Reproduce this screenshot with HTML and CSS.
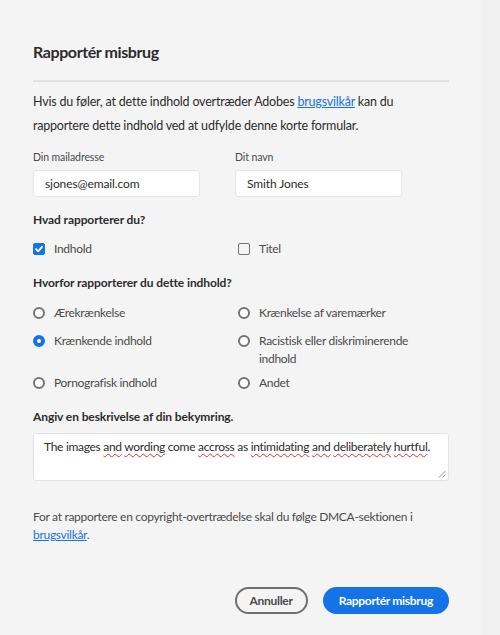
FILE: index.html
```html
<!DOCTYPE html>
<html lang="da">
<head>
<meta charset="utf-8">
<title>Rapportér misbrug</title>
<link rel="stylesheet" href="styles.css">
</head>
<body>
<div class="page">
  <div class="dialog">
    <h1 class="title">Rapportér misbrug</h1>
    <hr class="divider">
    <p class="intro"><span class="line">Hvis du føler, at dette indhold overtræder Adobes <a href="#" class="link">brugsvilkår</a> kan du</span><span class="line">rapportere dette indhold ved at udfylde denne korte formular.</span></p>

    <div class="fields">
      <div class="field">
        <label class="field-label">Din mailadresse</label>
        <div class="input">sjones@email.com</div>
      </div>
      <div class="field">
        <label class="field-label">Dit navn</label>
        <div class="input">Smith Jones</div>
      </div>
    </div>

    <h2 class="section section-what">Hvad rapporterer du?</h2>
    <div class="options checks">
      <div class="option"><span class="checkbox checked"><svg viewBox="0 0 12 12" width="12" height="12"><path d="M3 6.2 L5.1 8.3 L9 3.8" fill="none" stroke="#fff" stroke-width="1.8" stroke-linecap="round" stroke-linejoin="round"/></svg></span><span>Indhold</span></div>
      <div class="option"><span class="checkbox"></span><span>Titel</span></div>
    </div>

    <h2 class="section section-why">Hvorfor rapporterer du dette indhold?</h2>
    <div class="options radios">
      <div class="option"><span class="radio"></span><span>Ærekrænkelse</span></div>
      <div class="option"><span class="radio"></span><span>Krænkelse af varemærker</span></div>
      <div class="option"><span class="radio selected"></span><span>Krænkende indhold</span></div>
      <div class="option"><span class="radio"></span><span class="wrap-label">Racistisk eller diskriminerende indhold</span></div>
      <div class="option"><span class="radio"></span><span>Pornografisk indhold</span></div>
      <div class="option"><span class="radio"></span><span>Andet</span></div>
    </div>

    <h2 class="section section-desc">Angiv en beskrivelse af din bekymring.</h2>
    <div class="textarea">The images <span class="sp">and</span> <span class="sp">wording</span> come <span class="sp">accross</span> as <span class="sp">intimidating</span> <span class="sp">and</span> <span class="sp">deliberately</span> <span class="sp">hurtful</span>.<svg class="grip" viewBox="0 0 8 8" width="8" height="8"><path d="M7.5 1 L1 7.5 M7.5 4.5 L4.5 7.5" stroke="#8a8a8a" stroke-width="1"/></svg></div>

    <p class="note">For at rapportere en copyright-overtrædelse skal du følge DMCA-sektionen i <a href="#" class="link">brugsvilkår</a>.</p>

    <div class="actions">
      <button class="btn btn-secondary">Annuller</button>
      <button class="btn btn-primary">Rapportér misbrug</button>
    </div>
  </div>
  <div class="strip"></div>
</div>
</body>
</html>
```
FILE: styles.css
```css
* { box-sizing: border-box; }
html, body { margin: 0; padding: 0; }
body {
  background: #f4f4f4;
  font-family: Lato, "Open Sans", "Liberation Sans", sans-serif;
  color: #2c2c2c;
}
.page {
  display: flex;
  min-height: 635px;
}
.dialog {
  width: 482px;
  padding: 40px 33px 0 33px;
  background: #f4f4f4;
}
.strip {
  flex: 1;
  background: #f0f0f0;
}
.title {
  margin: 0;
  font-size: 16px;
  letter-spacing: -0.4px;
  font-weight: 700;
  line-height: 24px;
  color: #2c2c2c;
}
.divider {
  margin: 16px 0 0;
  border: 0;
  height: 2px;
  background: #e1e1e1;
  width: 416px;
}
.intro {
  margin: 8px 0 0;
  font-size: 12.5px;
  letter-spacing: -0.2px;
  line-height: 24px;
  color: #2c2c2c;
  width: 416px;
}
.line { display: block; white-space: nowrap; }
.link {
  color: #1473e6;
  text-decoration: underline;
}
.fields {
  display: flex;
  gap: 35px;
  margin-top: 11px;
}
.field {
  display: flex;
  flex-direction: column;
  width: 167px;
}
.field-label {
  font-size: 10.5px;
  letter-spacing: -0.1px;
  color: #4b4b4b;
  line-height: 16px;
  margin-bottom: 5px;
}
.input {
  height: 27px;
  background: #fff;
  border: 1px solid #e6e6e6;
  border-radius: 3px;
  padding: 0 11px;
  font-size: 12px;
  letter-spacing: -0.1px;
  line-height: 25px;
  color: #2c2c2c;
}
.section {
  margin: 0;
  font-size: 12px;
  letter-spacing: -0.1px;
  font-weight: 700;
  line-height: 18px;
  color: #2c2c2c;
}
.section-what { margin-top: 14px; }
.section-why { margin-top: 17px; }
.section-desc { margin-top: 17px; }
.options {
  display: grid;
  grid-template-columns: 205px 180px;
  row-gap: 12px;
  font-size: 12px;
  letter-spacing: -0.3px;
  color: #4b4b4b;
  line-height: 16px;
}
.options.checks { margin-top: 12px; }
.options.radios { margin-top: 13px; }
.wrap-label { line-height: 18px; margin-top: -1px; margin-bottom: -5px; }
.option {
  display: flex;
  align-items: flex-start;
  gap: 9px;
}
.checkbox {
  flex: none;
  width: 12px;
  height: 12px;
  margin-top: 2px;
  border: 1.5px solid #747474;
  border-radius: 2px;
  display: flex;
}
.checkbox.checked {
  background: #1473e6;
  border-color: #1473e6;
}
.checkbox.checked svg { margin: -1.5px; }
.radio {
  flex: none;
  width: 12px;
  height: 12px;
  margin-top: 2px;
  border: 2px solid #747474;
  border-radius: 50%;
  background: #fff;
}
.radio.selected {
  border: 4px solid #1473e6;
}
.textarea {
  position: relative;
  margin-top: 7px;
  width: 416px;
  height: 48px;
  background: #fff;
  border: 1px solid #e3e3e3;
  border-radius: 3px;
  padding: 3px 10px;
  font-size: 12px;
  letter-spacing: -0.3px;
  line-height: 20px;
  color: #2c2c2c;
  white-space: nowrap;
}
.sp {
  text-decoration: underline wavy #e0322e;
  text-decoration-thickness: 1px;
  text-underline-offset: 2px;
}
.grip {
  position: absolute;
  right: 2px;
  bottom: 2px;
}
.note {
  margin: 27px 0 0;
  width: 416px;
  font-size: 12px;
  letter-spacing: -0.3px;
  line-height: 18px;
  color: #4b4b4b;
}
.actions {
  display: flex;
  justify-content: flex-end;
  gap: 15px;
  margin-top: 43px;
  width: 416px;
}
.btn {
  height: 27px;
  border-radius: 14px;
  font-family: inherit;
  font-size: 12px;
  letter-spacing: -0.3px;
  font-weight: 700;
  padding: 0 14px;
  cursor: pointer;
}
.btn-secondary {
  background: transparent;
  border: 2px solid #6e6e6e;
  color: #4b4b4b;
  padding: 0 13px;
}
.btn-primary {
  background: #1473e6;
  border: 2px solid #1473e6;
  color: #fff;
}
```
